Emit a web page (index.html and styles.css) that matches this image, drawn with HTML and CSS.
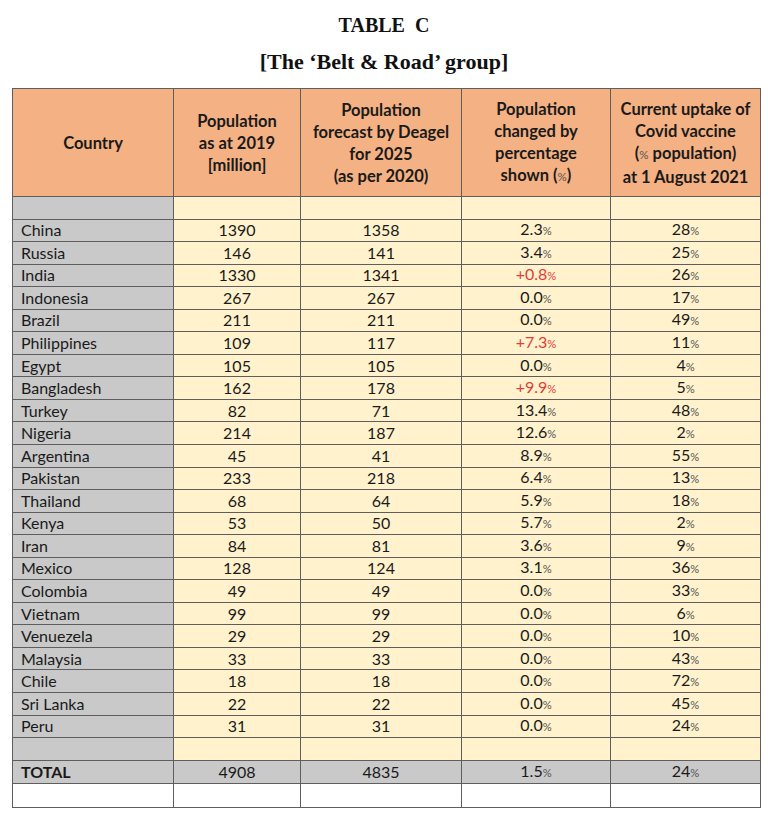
FILE: index.html
```html
<!DOCTYPE html>
<html>
<head>
<meta charset="utf-8">
<link rel="stylesheet" href="styles.css">
</head>
<body>
<div class="page">
  <h1 class="title">TABLE&nbsp; C</h1>
  <h2 class="subtitle">[The ‘Belt &amp; Road’ group]</h2>
  <table class="grid">
    <colgroup>
      <col class="c1"><col class="c2"><col class="c3"><col class="c4"><col class="c5">
    </colgroup>
    <thead>
      <tr class="head">
        <th>Country</th>
        <th>Population<br>as at 2019<br>[million]</th>
        <th>Population<br>forecast by Deagel<br>for 2025<br>(as per 2020)</th>
        <th>Population<br>changed by<br>percentage<br>shown (<span class="pc">%</span>)</th>
        <th>Current uptake of<br>Covid vaccine<br>(<span class="pc">%</span> population)<br>at 1 August 2021</th>
      </tr>
    </thead>
    <tbody>
      <tr class="blank"><td class="cty"></td><td></td><td></td><td></td><td></td></tr>
      <tr><td class="cty">China</td><td>1390</td><td>1358</td><td>2.3<span class="pc">%</span></td><td>28<span class="pc">%</span></td></tr>
      <tr><td class="cty">Russia</td><td>146</td><td>141</td><td>3.4<span class="pc">%</span></td><td>25<span class="pc">%</span></td></tr>
      <tr><td class="cty">India</td><td>1330</td><td>1341</td><td class="red">+0.8<span class="pc">%</span></td><td>26<span class="pc">%</span></td></tr>
      <tr><td class="cty">Indonesia</td><td>267</td><td>267</td><td>0.0<span class="pc">%</span></td><td>17<span class="pc">%</span></td></tr>
      <tr><td class="cty">Brazil</td><td>211</td><td>211</td><td>0.0<span class="pc">%</span></td><td>49<span class="pc">%</span></td></tr>
      <tr><td class="cty">Philippines</td><td>109</td><td>117</td><td class="red">+7.3<span class="pc">%</span></td><td>11<span class="pc">%</span></td></tr>
      <tr><td class="cty">Egypt</td><td>105</td><td>105</td><td>0.0<span class="pc">%</span></td><td>4<span class="pc">%</span></td></tr>
      <tr><td class="cty">Bangladesh</td><td>162</td><td>178</td><td class="red">+9.9<span class="pc">%</span></td><td>5<span class="pc">%</span></td></tr>
      <tr><td class="cty">Turkey</td><td>82</td><td>71</td><td>13.4<span class="pc">%</span></td><td>48<span class="pc">%</span></td></tr>
      <tr><td class="cty">Nigeria</td><td>214</td><td>187</td><td>12.6<span class="pc">%</span></td><td>2<span class="pc">%</span></td></tr>
      <tr><td class="cty">Argentina</td><td>45</td><td>41</td><td>8.9<span class="pc">%</span></td><td>55<span class="pc">%</span></td></tr>
      <tr><td class="cty">Pakistan</td><td>233</td><td>218</td><td>6.4<span class="pc">%</span></td><td>13<span class="pc">%</span></td></tr>
      <tr><td class="cty">Thailand</td><td>68</td><td>64</td><td>5.9<span class="pc">%</span></td><td>18<span class="pc">%</span></td></tr>
      <tr><td class="cty">Kenya</td><td>53</td><td>50</td><td>5.7<span class="pc">%</span></td><td>2<span class="pc">%</span></td></tr>
      <tr><td class="cty">Iran</td><td>84</td><td>81</td><td>3.6<span class="pc">%</span></td><td>9<span class="pc">%</span></td></tr>
      <tr><td class="cty">Mexico</td><td>128</td><td>124</td><td>3.1<span class="pc">%</span></td><td>36<span class="pc">%</span></td></tr>
      <tr><td class="cty">Colombia</td><td>49</td><td>49</td><td>0.0<span class="pc">%</span></td><td>33<span class="pc">%</span></td></tr>
      <tr><td class="cty">Vietnam</td><td>99</td><td>99</td><td>0.0<span class="pc">%</span></td><td>6<span class="pc">%</span></td></tr>
      <tr><td class="cty">Venuezela</td><td>29</td><td>29</td><td>0.0<span class="pc">%</span></td><td>10<span class="pc">%</span></td></tr>
      <tr><td class="cty">Malaysia</td><td>33</td><td>33</td><td>0.0<span class="pc">%</span></td><td>43<span class="pc">%</span></td></tr>
      <tr><td class="cty">Chile</td><td>18</td><td>18</td><td>0.0<span class="pc">%</span></td><td>72<span class="pc">%</span></td></tr>
      <tr><td class="cty">Sri Lanka</td><td>22</td><td>22</td><td>0.0<span class="pc">%</span></td><td>45<span class="pc">%</span></td></tr>
      <tr><td class="cty">Peru</td><td>31</td><td>31</td><td>0.0<span class="pc">%</span></td><td>24<span class="pc">%</span></td></tr>
      <tr class="blank"><td class="cty"></td><td></td><td></td><td></td><td></td></tr>
      <tr class="total"><td class="cty">TOTAL</td><td>4908</td><td>4835</td><td>1.5<span class="pc">%</span></td><td>24<span class="pc">%</span></td></tr>
      <tr class="white"><td></td><td></td><td></td><td></td><td></td></tr>
    </tbody>
  </table>
</div>
</body>
</html>
```

FILE: styles.css
```css
html, body {
  margin: 0;
  padding: 0;
  background: #ffffff;
}

.page {
  width: 768px;
  padding-top: 12px;
}

.title,
.subtitle {
  margin: 0;
  font-family: "Liberation Serif", "Times New Roman", serif;
  font-weight: bold;
  font-size: 20px;
  line-height: 26px;
  color: #111;
  text-align: center;
}

.title {
  margin-bottom: 11px;
}

.subtitle {
  font-size: 22px;
  margin-bottom: 13px;
}

.grid {
  margin-left: 12px;
  width: 748px;
  border-collapse: collapse;
  table-layout: fixed;
  font-family: Lato, "Open Sans", sans-serif;
  font-size: 16px;
  color: #1a1a1a;
}

.c1 { width: 161px; }
.c2 { width: 127px; }
.c3 { width: 161px; }
.c4 { width: 149px; }
.c5 { width: 150px; }

.grid th,
.grid td {
  border: 1px solid #5e5e5e;
  padding: 0;
  text-align: center;
  vertical-align: middle;
}

.grid th {
  background: #f4b183;
  height: 107px;
  font-size: 16.5px;
  font-weight: bold;
  line-height: 22px;
  color: #1a1a1a;
}

.grid tbody tr {
  height: 22.55px;
}

.grid td {
  background: #fff2cc;
  height: auto;
  line-height: 18px;
}

.grid td.cty {
  background: #c9c9c9;
  text-align: left;
  padding-left: 8px;
}

.grid tr.blank {
  height: 22.5px;
}

.grid tr.total {
  height: 23.5px;
}

.grid tr.total td {
  background: #c9c9c9;
}

.grid tr.total td.cty {
  font-weight: bold;
}

.grid tr.white {
  height: 23.5px;
}

.grid tr.white td {
  background: #ffffff;
}

.pc {
  font-size: 0.7em;
  color: #555;
}

th .pc {
  font-weight: normal;
}

.red {
  color: #e23c3a;
}

.red .pc {
  color: #e23c3a;
}
```
